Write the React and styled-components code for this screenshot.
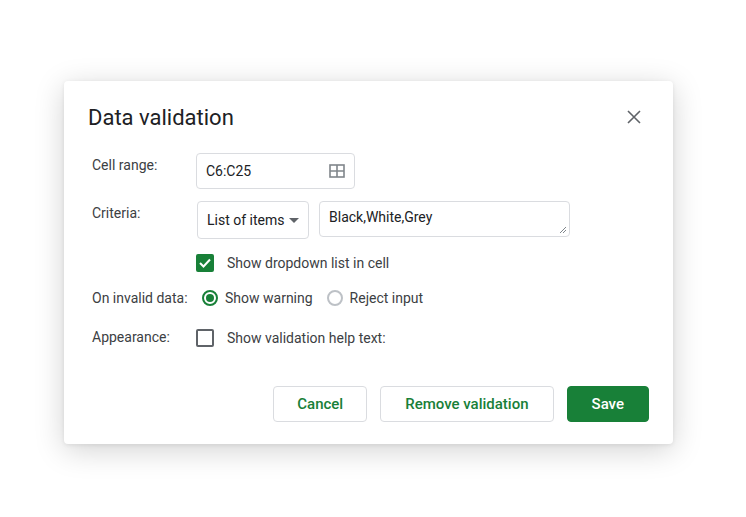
import styled, { createGlobalStyle } from "styled-components";

const Global = createGlobalStyle`
  body { margin: 0; background: #fff; font-family: Roboto, "Liberation Sans", sans-serif; }
`;

const Page = styled.div`
  width: 746px;
  height: 517px;
  padding: 81px 0 0 64px;
  box-sizing: border-box;
`;

const Dialog = styled.div`
  width: 609px;
  height: 363px;
  background: #fff;
  border-radius: 4px;
  box-shadow: 0 6px 30px rgba(0, 0, 0, 0.18), 0 1px 4px rgba(0, 0, 0, 0.08);
  box-sizing: border-box;
  padding: 21px 24px 0 24px;
  color: #202124;
`;

const Header = styled.div`
  display: flex;
  justify-content: space-between;
  align-items: center;
  height: 30px;
`;

const Title = styled.h2`
  margin: 0;
  font-size: 22px;
  font-weight: 400;
  color: #202124;
`;

const Close = styled.button`
  background: none;
  border: none;
  padding: 0;
  margin-right: 8px;
  display: flex;
  cursor: pointer;
`;

const Form = styled.div`
  display: grid;
  grid-template-columns: 104px 1fr;
  padding-left: 4px;
  margin-top: 21px;
  font-size: 14px;
  row-gap: 0;
`;

const Label = styled.div`
  color: #3c4043;
  font-size: 14px;
  padding-top: ${(p) => p.$top || 0}px;
  white-space: nowrap;
`;

const Row = styled.div`
  display: flex;
  align-items: ${(p) => p.$align || "flex-start"};
  gap: ${(p) => p.$gap || 10}px;
  margin-bottom: ${(p) => p.$mb || 0}px;
  margin-left: ${(p) => p.$ml || 0}px;
`;

const Box = styled.div`
  border: 1px solid #dadce0;
  border-radius: 4px;
  box-sizing: border-box;
  display: flex;
  align-items: ${(p) => p.$align || "center"};
  justify-content: space-between;
  padding: 0 9px;
  height: ${(p) => p.$h}px;
  width: ${(p) => p.$w}px;
  font-size: 14px;
  color: #202124;
  position: relative;
`;

const Check = styled.span`
  width: 18px;
  height: 18px;
  border-radius: 2px;
  box-sizing: border-box;
  border: 2px solid ${(p) => (p.$on ? "#188038" : "#5f6368")};
  background: ${(p) => (p.$on ? "#188038" : "#fff")};
  display: inline-flex;
  align-items: center;
  justify-content: center;
`;

const Radio = styled.span`
  width: 16px;
  height: 16px;
  border-radius: 50%;
  box-sizing: border-box;
  border: 2px solid ${(p) => (p.$on ? "#188038" : "#bdc1c6")};
  display: inline-flex;
  align-items: center;
  justify-content: center;
  &::after {
    content: "";
    width: 8px;
    height: 8px;
    border-radius: 50%;
    background: ${(p) => (p.$on ? "#188038" : "transparent")};
  }
`;

const Option = styled.span`
  display: inline-flex;
  align-items: center;
  gap: ${(p) => p.$gap || 7}px;
  color: #3c4043;
`;

const Footer = styled.div`
  display: flex;
  justify-content: flex-end;
  gap: 13px;
  margin-top: 39px;
`;

const Button = styled.button`
  height: 36px;
  padding: 0 ${(p) => p.$px}px;
  border-radius: 4px;
  font-family: inherit;
  font-size: 15px;
  font-weight: 500;
  cursor: pointer;
  border: 1px solid ${(p) => (p.$primary ? "#188038" : "#dadce0")};
  background: ${(p) => (p.$primary ? "#188038" : "#fff")};
  color: ${(p) => (p.$primary ? "#fff" : "#188038")};
`;

export default function App() {
  return (
    <Page>
      <Global />
      <Dialog>
        <Header>
          <Title>Data validation</Title>
          <Close>
            <svg width="14" height="14" viewBox="0 0 14 14">
              <path d="M1 1L13 13M13 1L1 13" stroke="#5f6368" strokeWidth="1.6" />
            </svg>
          </Close>
        </Header>
        <Form>
          <Label $top={4}>Cell range:</Label>
          <Row $mb={12}>
            <Box $w={159} $h={36}>
              C6:C25
              <svg width="16" height="14" viewBox="0 0 16 14">
                <rect x="1" y="1" width="14" height="12" fill="none" stroke="#80868b" strokeWidth="1.6" />
                <path d="M8 1V13M1 7H15" stroke="#80868b" strokeWidth="1.6" />
              </svg>
            </Box>
          </Row>
          <Label $top={4}>Criteria:</Label>
          <Row $ml={1} $mb={15}>
            <Box $w={112} $h={38}>
              List of items
              <svg width="10" height="5" viewBox="0 0 10 5">
                <path d="M0 0H10L5 5Z" fill="#5f6368" />
              </svg>
            </Box>
            <Box $w={251} $h={36} $align="flex-start" style={{ paddingTop: 7 }}>
              Black,White,Grey
              <svg width="8" height="8" viewBox="0 0 8 8" style={{ position: "absolute", right: 2, bottom: 2 }}>
                <path d="M7 1L1 7M7 4L4 7" stroke="#80868b" strokeWidth="1" />
              </svg>
            </Box>
          </Row>
          <div />
          <Row $align="center" $mb={18}>
            <Option $gap={13}>
              <Check $on>
                <svg width="12" height="10" viewBox="0 0 12 10">
                  <path d="M1 5L4.5 8.5L11 1.5" stroke="#fff" strokeWidth="2" fill="none" />
                </svg>
              </Check>
              Show dropdown list in cell
            </Option>
          </Row>
          <Label $top={0}>On invalid data:</Label>
          <Row $align="center" $ml={6} $gap={14} $mb={23}>
            <Option>
              <Radio $on />
              Show warning
            </Option>
            <Option>
              <Radio />
              Reject input
            </Option>
          </Row>
          <Label>Appearance:</Label>
          <Row $align="center">
            <Option $gap={13}>
              <Check />
              Show validation help text:
            </Option>
          </Row>
        </Form>
        <Footer>
          <Button $px={23}>Cancel</Button>
          <Button $px={24}>Remove validation</Button>
          <Button $px={24} $primary>Save</Button>
        </Footer>
      </Dialog>
    </Page>
  );
}
